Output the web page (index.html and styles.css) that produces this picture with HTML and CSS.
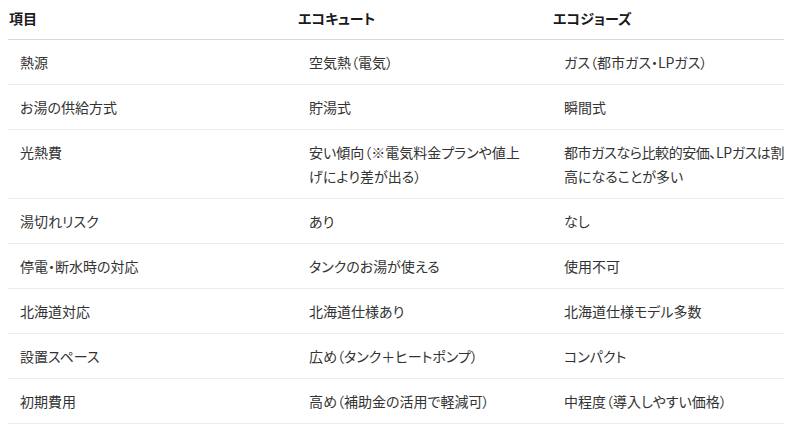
FILE: index.html
```html
<!DOCTYPE html>
<html lang="ja">
<head>
<meta charset="utf-8">
<link rel="stylesheet" href="styles.css">
</head>
<body>
<table class="cmp">
  <colgroup>
    <col class="c1">
    <col class="c2">
    <col class="c3">
  </colgroup>
  <thead>
    <tr><th>項目</th><th>エコキュート</th><th>エコジョーズ</th></tr>
  </thead>
  <tbody>
    <tr><td>熱源</td><td>空気熱（電気）</td><td>ガス（都市ガス・LPガス）</td></tr>
    <tr><td>お湯の供給方式</td><td>貯湯式</td><td>瞬間式</td></tr>
    <tr><td>光熱費</td><td>安い傾向（※電気料金プランや値上<br>げにより差が出る）</td><td><span class="line">都市ガスなら比較的安価、LPガスは割</span><br>高になることが多い</td></tr>
    <tr><td>湯切れリスク</td><td>あり</td><td>なし</td></tr>
    <tr><td>停電・断水時の対応</td><td>タンクのお湯が使える</td><td>使用不可</td></tr>
    <tr><td>北海道対応</td><td>北海道仕様あり</td><td>北海道仕様モデル多数</td></tr>
    <tr><td>設置スペース</td><td>広め（タンク＋ヒートポンプ）</td><td>コンパクト</td></tr>
    <tr><td>初期費用</td><td>高め（補助金の活用で軽減可）</td><td>中程度（導入しやすい価格）</td></tr>
  </tbody>
</table>
</body>
</html>
```
FILE: styles.css
```css
html, body {
  margin: 0;
  padding: 0;
  background: #ffffff;
}
body {
  font-family: "Noto Sans CJK JP", "Noto Sans", sans-serif;
  font-size: 14px;
  color: #333333;
  font-feature-settings: "palt";
}
.cmp {
  margin: 0 0 0 8px;
  width: 776px;
  table-layout: fixed;
  border-collapse: collapse;
}
.c1 { width: 289px; }
.c2 { width: 255px; }
.c3 { width: 232px; }
.cmp th {
  text-align: left;
  font-weight: bold;
  color: #1a1a1a;
  line-height: 24px;
  padding: 6px 0 9px 1px;
  border-bottom: 1px solid #d9d9d9;
}
.cmp td {
  line-height: 24px;
  padding: 10px 0 10px 12px;
  border-bottom: 1px solid #ececec;
  vertical-align: top;
}
.line {
  white-space: nowrap;
  letter-spacing: -0.4px;
}
```
